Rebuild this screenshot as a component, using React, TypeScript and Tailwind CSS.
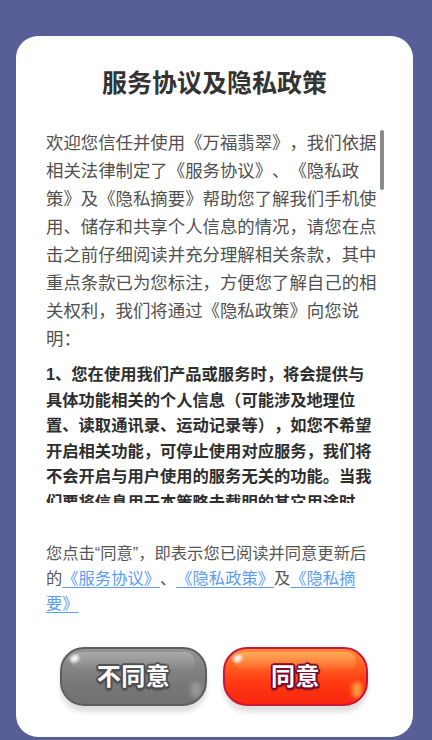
import React from "react";

const FONT = "[font-family:'Liberation_Sans','Noto_Sans_CJK_SC',sans-serif]";

function GlossButton({ label, variant }: { label: string; variant: "gray" | "red" }) {
  const isRed = variant === "red";
  return (
    <div className="rounded-[24px] shadow-[0_6px_5px_rgba(0,0,0,0.13)]">
      <div
        className={
          "relative w-full h-[59px] rounded-[24px] border-2 overflow-hidden flex items-center justify-center " +
          (isRed
            ? "border-[#c8163c] bg-[linear-gradient(180deg,#ff8a3a_0%,#ff5a1e_35%,#ff3a12_60%,#f7260e_100%)]"
            : "border-[#5e5e5e] bg-[linear-gradient(180deg,#959595_0%,#838383_35%,#787878_65%,#717171_100%)]")
        }
      >
        <div
          className={
            "absolute left-[10px] right-[10px] top-[3px] h-[20px] rounded-[14px] " +
            (isRed
              ? "bg-[linear-gradient(180deg,rgba(255,200,120,0.55),rgba(255,160,80,0))]"
              : "bg-[linear-gradient(180deg,rgba(255,255,255,0.22),rgba(255,255,255,0))]")
          }
        />
        <div className="absolute left-[8px] top-[6px] w-[9px] h-[7px] rounded-full bg-white/90 blur-[1.5px] -rotate-[30deg]" />
        <div
          className={
            "absolute right-[4px] bottom-[6px] w-[10px] h-[16px] rounded-full blur-[2px] " +
            (isRed ? "bg-[#ffb347]/80" : "bg-white/25")
          }
        />
        <span
          className={
            "relative text-white font-bold text-[24px] leading-none tracking-[0.5px] " +
            (isRed
              ? "[text-shadow:-1.5px_-1.5px_0_#7d0b2e,1.5px_-1.5px_0_#7d0b2e,-1.5px_1.5px_0_#7d0b2e,1.5px_1.5px_0_#7d0b2e,0_2px_0_#7d0b2e,0_-2px_0_#7d0b2e,2px_0_0_#7d0b2e,-2px_0_0_#7d0b2e,0_3px_2px_rgba(80,0,20,0.45)]"
              : "[text-shadow:-1.5px_-1.5px_0_#505050,1.5px_-1.5px_0_#505050,-1.5px_1.5px_0_#505050,1.5px_1.5px_0_#505050,0_2px_0_#505050,0_-2px_0_#505050,2px_0_0_#505050,-2px_0_0_#505050,0_3px_2px_rgba(0,0,0,0.4)]")
          }
        >
          {label}
        </span>
      </div>
    </div>
  );
}

function Link({ children }: { children: React.ReactNode }) {
  return (
    <span className="text-[#5b9cf6] underline decoration-[#5b9cf6] decoration-1 underline-offset-[3px]">{children}</span>
  );
}

export default function App() {
  return (
    <div className={"w-[432px] h-[740px] bg-[#585e97] pt-[36px] pl-[16px] overflow-hidden [text-spacing-trim:space-all] " + FONT}>
      <div className="w-[397px] h-[701px] bg-white rounded-[22px] flex flex-col">
        <h1 className="pt-[30px] text-center text-[25px] leading-[34px] font-bold text-[#333333]">服务协议及隐私政策</h1>

        <div className="relative mt-[29px] h-[374px] overflow-hidden">
          <div className="pl-[30px] w-[363px]">
            <p className="text-[17.4px] leading-[28px] text-[#505050]">
              欢迎您信任并使用《万福翡翠》，我们依据相关法律制定了《服务协议》、《隐私政策》及《隐私摘要》帮助您了解我们手机使用、储存和共享个人信息的情况，请您在点击之前仔细阅读并充分理解相关条款，其中重点条款已为您标注，方便您了解自己的相关权利，我们将通过《隐私政策》向您说明：
            </p>
            <p className="mt-[9px] text-[16.3px] leading-[25.5px] font-bold text-[#2e2e2e]">
              1、您在使用我们产品或服务时，将会提供与具体功能相关的个人信息（可能涉及地理位置、读取通讯录、运动记录等），如您不希望开启相关功能，可停止使用对应服务，我们将不会开启与用户使用的服务无关的功能。当我们要将信息用于本策略未载明的其它用途时，会事先征求您的同意。
            </p>
            <p className="mt-[9px] text-[16.3px] leading-[25.5px] font-bold text-[#2e2e2e]">
              2、我们会采取业界先进的安全措施保护您的信息安全。
            </p>
          </div>
          <div className="absolute left-[364px] top-[1px] w-[4px] h-[60px] rounded-full bg-[#8a8a8a]" />
        </div>

        <p className="mt-[38px] pl-[30px] w-[354px] text-[16.3px] leading-[25px] text-[#555555]">
          您点击“同意”，即表示您已阅读并同意更新后的<Link>《服务协议》</Link>、<Link>《隐私政策》</Link>及<Link>《隐私摘要》</Link>
        </p>

        <div className="mt-[31px] pl-[44px] flex gap-[16px]">
          <div className="w-[147px]">
            <GlossButton label="不同意" variant="gray" />
          </div>
          <div className="w-[145px]">
            <GlossButton label="同意" variant="red" />
          </div>
        </div>
      </div>
    </div>
  );
}
